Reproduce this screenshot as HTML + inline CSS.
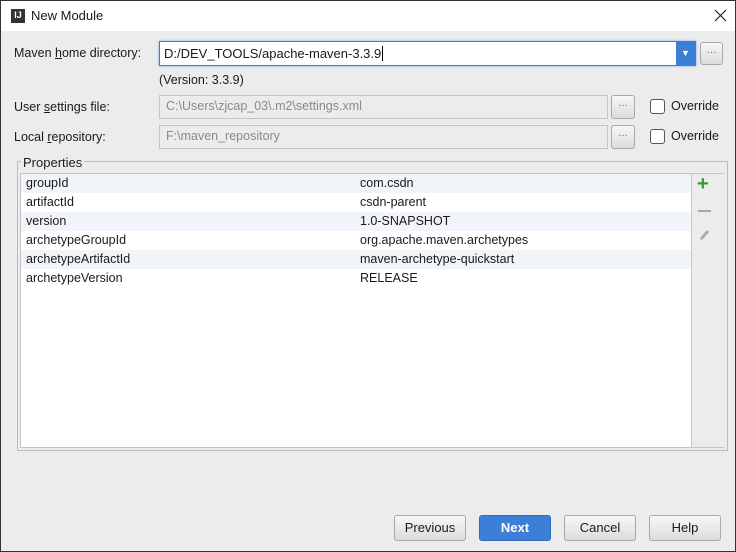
<!DOCTYPE html><html><head><style>
body{margin:0;width:736px;height:552px;overflow:hidden;font-family:"Liberation Sans",sans-serif;font-size:12.5px;color:#1a1a1a}
.win{position:absolute;left:0;top:0;width:734px;height:550px;border:1px solid #333;background:#ececec}
.tb{position:absolute;left:0;top:0;width:734px;height:30px;background:#fff}
.a{position:absolute;white-space:nowrap}
.f{position:absolute;border:1px solid #c4c4c4;background:#ececec;color:#8a8a8a;box-sizing:border-box;padding:3px 0 0 6px}
.btn{position:absolute;border:1px solid #a8a8a8;border-radius:3px;background:linear-gradient(#f7f7f7,#dcdcdc);box-sizing:border-box;text-align:center;line-height:24px;font-size:13px}
.cb{position:absolute;width:15px;height:15px;border:1px solid #555;border-radius:3px;background:#fff;box-sizing:border-box}
.r{position:absolute;left:20px;width:670px;height:19px;line-height:19px}
.r span{position:absolute}
</style></head><body><div class="win">
<div class="tb">
<div class="a" style="left:10px;top:8px;width:14px;height:14px;background:#333;color:#fff;font-size:9px;font-weight:bold;line-height:12px;text-align:center">IJ</div>
<div class="a" style="left:30px;top:7px;font-size:13px">New Module</div>
<svg class="a" style="left:713px;top:8px" width="13" height="13"><path d="M1 1L12 12M12 1L1 12" stroke="#222" stroke-width="1.2"/></svg>
</div>
<div class="a" style="left:13px;top:45px">Maven <u>h</u>ome directory:</div>
<div class="a" style="left:158px;top:40px;width:537px;height:25px;border:1px solid #3d7fd6;box-shadow:0 0 2px #6aa0e6;background:#fff;box-sizing:border-box"></div>
<div class="a" style="left:163px;top:45px;font-size:13px">D:/DEV_TOOLS/apache-maven-3.3.9<span style="border-left:1px solid #000;margin-left:1px"></span></div>
<div class="a" style="left:675px;top:41px;width:19px;height:23px;background:#3d7fd6;color:#fff;font-size:9px;text-align:center;line-height:23px">▼</div>
<div class="btn" style="left:699px;top:41px;width:23px;height:23px;line-height:16px;font-size:10px;color:#666">…</div>
<div class="a" style="left:158px;top:72px">(Version: 3.3.9)</div>
<div class="a" style="left:13px;top:99px">User <u>s</u>ettings file:</div>
<div class="f" style="left:158px;top:94px;width:449px;height:24px">C:\Users\zjcap_03\.m2\settings.xml</div>
<div class="btn" style="left:610px;top:94px;width:24px;height:24px;line-height:16px;font-size:10px;color:#666">…</div>
<div class="cb" style="left:649px;top:98px"></div><div class="a" style="left:670px;top:98px">Override</div>
<div class="a" style="left:13px;top:129px">Local <u>r</u>epository:</div>
<div class="f" style="left:158px;top:124px;width:449px;height:24px">F:\maven_repository</div>
<div class="btn" style="left:610px;top:124px;width:24px;height:24px;line-height:16px;font-size:10px;color:#666">…</div>
<div class="cb" style="left:649px;top:128px"></div><div class="a" style="left:670px;top:128px">Override</div>
<div class="a" style="left:16px;top:160px;width:711px;height:290px;border:1px solid #bcbcbc;box-sizing:border-box"></div>
<div class="a" style="left:20px;top:154px;background:#ececec;padding:0 2px;font-size:13px">Properties</div>
<div class="a" style="left:19px;top:172px;width:704px;height:275px;border:1px solid #c4c4c4;background:#fff;box-sizing:border-box"></div>
<div class="a" style="left:690px;top:173px;width:32px;height:273px;border-left:1px solid #c8c8c8;background:#ececec"></div>
<div class="a" style="left:696px;top:172px;color:#2e9c2e;font-size:20px;font-weight:bold">+</div>
<div class="a" style="left:697px;top:209px;width:13px;height:2px;background:#aaa"></div>
<svg class="a" style="left:696px;top:227px" width="14" height="14"><path d="M3 12 L4 9 L10 2 L12 4 L6 11 Z" fill="#aaa"/></svg>
<div class="r" style="top:173px;background:#f1f4f8"><span style="left:5px">groupId</span><span style="left:339px">com.csdn</span></div>
<div class="r" style="top:192px"><span style="left:5px">artifactId</span><span style="left:339px">csdn-parent</span></div>
<div class="r" style="top:211px;background:#f1f4f8"><span style="left:5px">version</span><span style="left:339px">1.0-SNAPSHOT</span></div>
<div class="r" style="top:230px"><span style="left:5px">archetypeGroupId</span><span style="left:339px">org.apache.maven.archetypes</span></div>
<div class="r" style="top:249px;background:#f1f4f8"><span style="left:5px">archetypeArtifactId</span><span style="left:339px">maven-archetype-quickstart</span></div>
<div class="r" style="top:268px"><span style="left:5px">archetypeVersion</span><span style="left:339px">RELEASE</span></div>
<div class="btn" style="left:393px;top:514px;width:72px;height:26px">Previous</div>
<div class="btn" style="left:478px;top:514px;width:72px;height:26px;background:#3d7fd6;border-color:#2f6cc0;color:#fff;font-weight:bold">Next</div>
<div class="btn" style="left:563px;top:514px;width:72px;height:26px">Cancel</div>
<div class="btn" style="left:648px;top:514px;width:72px;height:26px">Help</div>
</div></body></html>
